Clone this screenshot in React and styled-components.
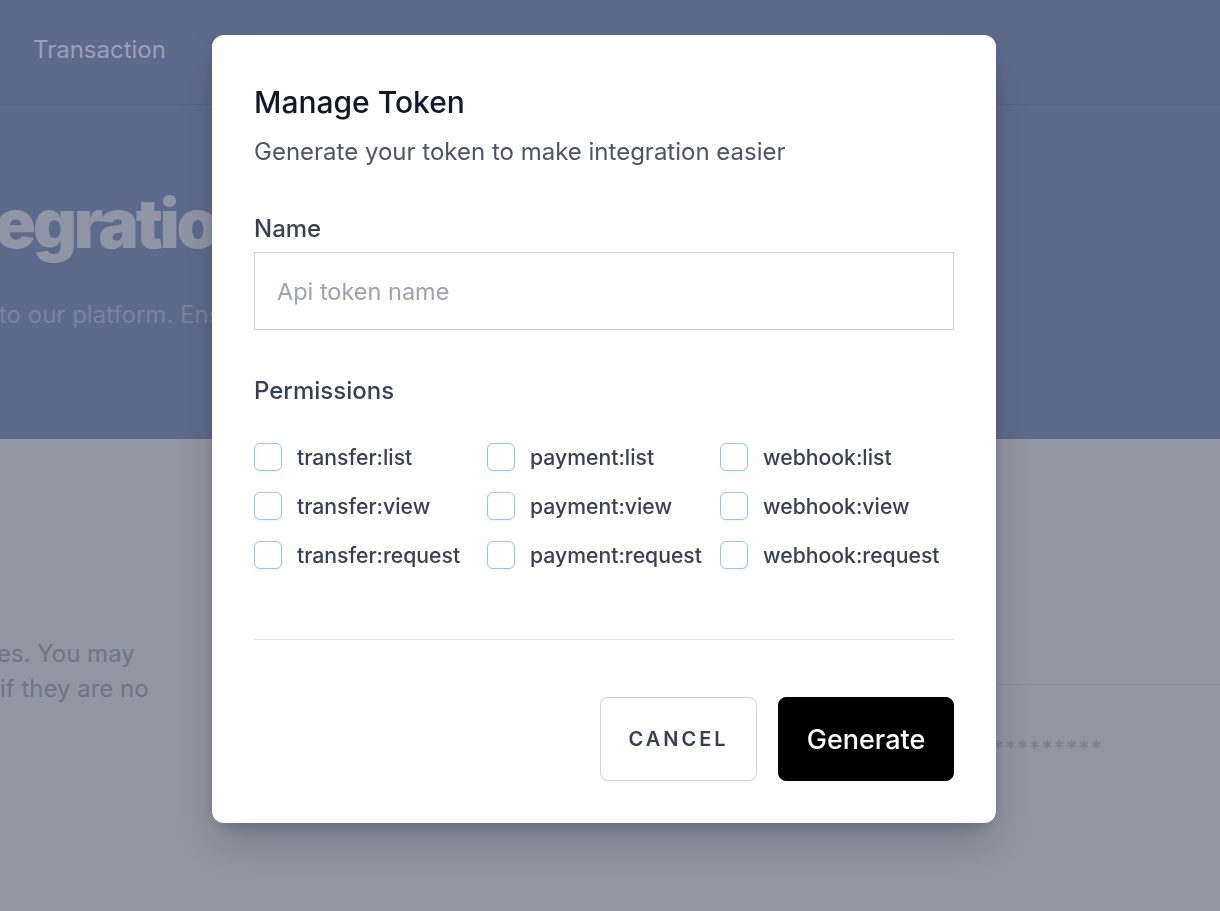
import React from "react";
import styled, { createGlobalStyle } from "styled-components";

const Global = createGlobalStyle`
  html, body { margin: 0; padding: 0; }
  body {
    font-family: Inter, "Noto Sans", "Liberation Sans", sans-serif;
    background: #9196a1;
    overflow: hidden;
    -webkit-font-smoothing: antialiased;
  }
  * { box-sizing: border-box; }
`;

/* ---------- background page (dimmed) ---------- */
const Page = styled.div`
  width: 1220px;
  height: 911px;
  overflow: hidden;
  display: flex;
  flex-direction: column;
`;

const Band = styled.div`
  background: #5e6a8c;
  height: 439px;
  display: flex;
  flex-direction: column;
`;

const Nav = styled.nav`
  height: 105px;
  border-bottom: 1px solid #56628a;
  display: flex;
  align-items: flex-start;
  padding: 34px 0 0 33px;
  gap: 40px;
`;

const NavItem = styled.span`
  font-size: 24px;
  line-height: 32px;
  color: #9aa0b6;
`;

const Hero = styled.div`
  display: flex;
  flex-direction: column;
  padding-top: 77px;
`;

const HeroTitle = styled.h1`
  margin: 0 0 0 ${(p) => p.$shift}px;
  font-size: 68px;
  line-height: 82px;
  font-weight: 900;
  letter-spacing: -3.2px;
  color: #8f95a3;
  white-space: nowrap;
`;

const HeroText = styled.p`
  margin: 33px 0 0 ${(p) => p.$shift}px;
  font-size: 24px;
  line-height: 36px;
  color: #7a82a1;
  white-space: nowrap;
`;

const Lower = styled.div`
  flex: 1;
  display: grid;
  grid-template-columns: 600px 1fr;
`;

const LeftCol = styled.div`
  padding-top: 197px;
`;

const FaintLine = styled.div`
  font-size: 24px;
  line-height: 35px;
  color: #6f7585;
  white-space: nowrap;
  margin-left: ${(p) => p.$shift || 0}px;
`;

const RightCol = styled.div`
  padding-top: 245px;
`;

const Card = styled.div`
  border-top: 1px solid #868b99;
  padding: 47px 0 0 356px;
`;

const Secret = styled.div`
  font-size: 22px;
  line-height: 32px;
  letter-spacing: 1.2px;
  color: #7b808e;
  white-space: nowrap;
`;

/* ---------- modal ---------- */
const Overlay = styled.div`
  position: fixed;
  inset: 0;
  display: flex;
  justify-content: center;
  align-items: flex-start;
  padding: 35px 12px 0 0;
`;

const Modal = styled.div`
  width: 784px;
  background: #ffffff;
  border-radius: 12px;
  padding: 42px 42px 42px;
  box-shadow: 0 20px 40px -8px rgba(20, 24, 40, 0.28), 0 8px 16px -6px rgba(20, 24, 40, 0.18);
  display: flex;
  flex-direction: column;
`;

const Title = styled.h2`
  margin: 0;
  font-size: 30px;
  line-height: 50px;
  font-weight: 500;
  color: #111827;
`;

const Subtitle = styled.p`
  margin: 9px 0 0;
  font-size: 24px;
  line-height: 32px;
  color: #4b5563;
`;

const Label = styled.label`
  display: block;
  margin-top: ${(p) => p.$top}px;
  font-size: 24px;
  line-height: 32px;
  font-weight: 500;
  color: #374151;
`;

const Input = styled.input`
  margin-top: 7px;
  width: 100%;
  height: 78px;
  border: 1px solid #d1d5db;
  border-radius: 0;
  padding: 0 22px;
  font-family: inherit;
  font-size: 23.5px;
  color: #111827;
  outline: none;
  &::placeholder { color: #9ca3af; }
`;

const PermGrid = styled.div`
  margin-top: 36px;
  display: grid;
  grid-template-columns: repeat(3, 233px);
  row-gap: 21px;
`;

const Perm = styled.label`
  display: flex;
  align-items: center;
  gap: 15px;
  height: 28px;
`;

const Box = styled.span`
  width: 28px;
  height: 28px;
  flex: none;
  border: 1px solid #93c5fd;
  border-radius: 6px;
  background: #fff;
  box-shadow: 0 1px 2px rgba(0, 0, 0, 0.05);
`;

const PermText = styled.span`
  font-size: 21.2px;
  font-weight: 500;
  color: #374151;
  white-space: nowrap;
`;

const Divider = styled.hr`
  margin: 70px 0 0;
  border: 0;
  border-top: 1px solid #e5e7eb;
`;

const Actions = styled.div`
  margin-top: 57px;
  display: flex;
  justify-content: flex-end;
  gap: 21px;
`;

const Button = styled.button`
  height: 84px;
  width: ${(p) => p.$w}px;
  border-radius: 8px;
  font-family: inherit;
  cursor: pointer;
  display: flex;
  align-items: center;
  justify-content: center;
  ${(p) =>
    p.$primary
      ? `
    background: #000;
    border: 1px solid #000;
    color: #fff;
    font-size: 27px;
    font-weight: 500;
  `
      : `
    background: #fff;
    border: 1px solid #d1d5db;
    color: #374151;
    font-size: 20px;
    font-weight: 600;
    letter-spacing: 3px;
    box-shadow: 0 1px 2px rgba(0,0,0,0.05);
  `}
`;

const perms = [
  "transfer:list",
  "payment:list",
  "webhook:list",
  "transfer:view",
  "payment:view",
  "webhook:view",
  "transfer:request",
  "payment:request",
  "webhook:request",
];

export default function App() {
  return (
    <>
      <Global />
      <Page>
        <Band>
          <Nav>
            <NavItem>Transaction</NavItem>
          </Nav>
          <Hero>
            <HeroTitle $shift={-86}>Integrations</HeroTitle>
            <HeroText $shift={-1}>to our platform. Ensure your integration is secure.</HeroText>
          </Hero>
        </Band>
        <Lower>
          <LeftCol>
            <FaintLine $shift={-3}>es. You may</FaintLine>
            <FaintLine>if they are no</FaintLine>
          </LeftCol>
          <RightCol>
            <Card>
              <Secret>************</Secret>
            </Card>
          </RightCol>
        </Lower>
      </Page>

      <Overlay>
        <Modal>
          <Title>Manage Token</Title>
          <Subtitle>Generate your token to make integration easier</Subtitle>
          <Label $top={45} htmlFor="token-name">Name</Label>
          <Input id="token-name" placeholder="Api token name" />
          <Label $top={45} as="div">Permissions</Label>
          <PermGrid>
            {perms.map((p) => (
              <Perm key={p}>
                <Box />
                <PermText>{p}</PermText>
              </Perm>
            ))}
          </PermGrid>
          <Divider />
          <Actions>
            <Button $w={157}>CANCEL</Button>
            <Button $w={176} $primary>Generate</Button>
          </Actions>
        </Modal>
      </Overlay>
    </>
  );
}
